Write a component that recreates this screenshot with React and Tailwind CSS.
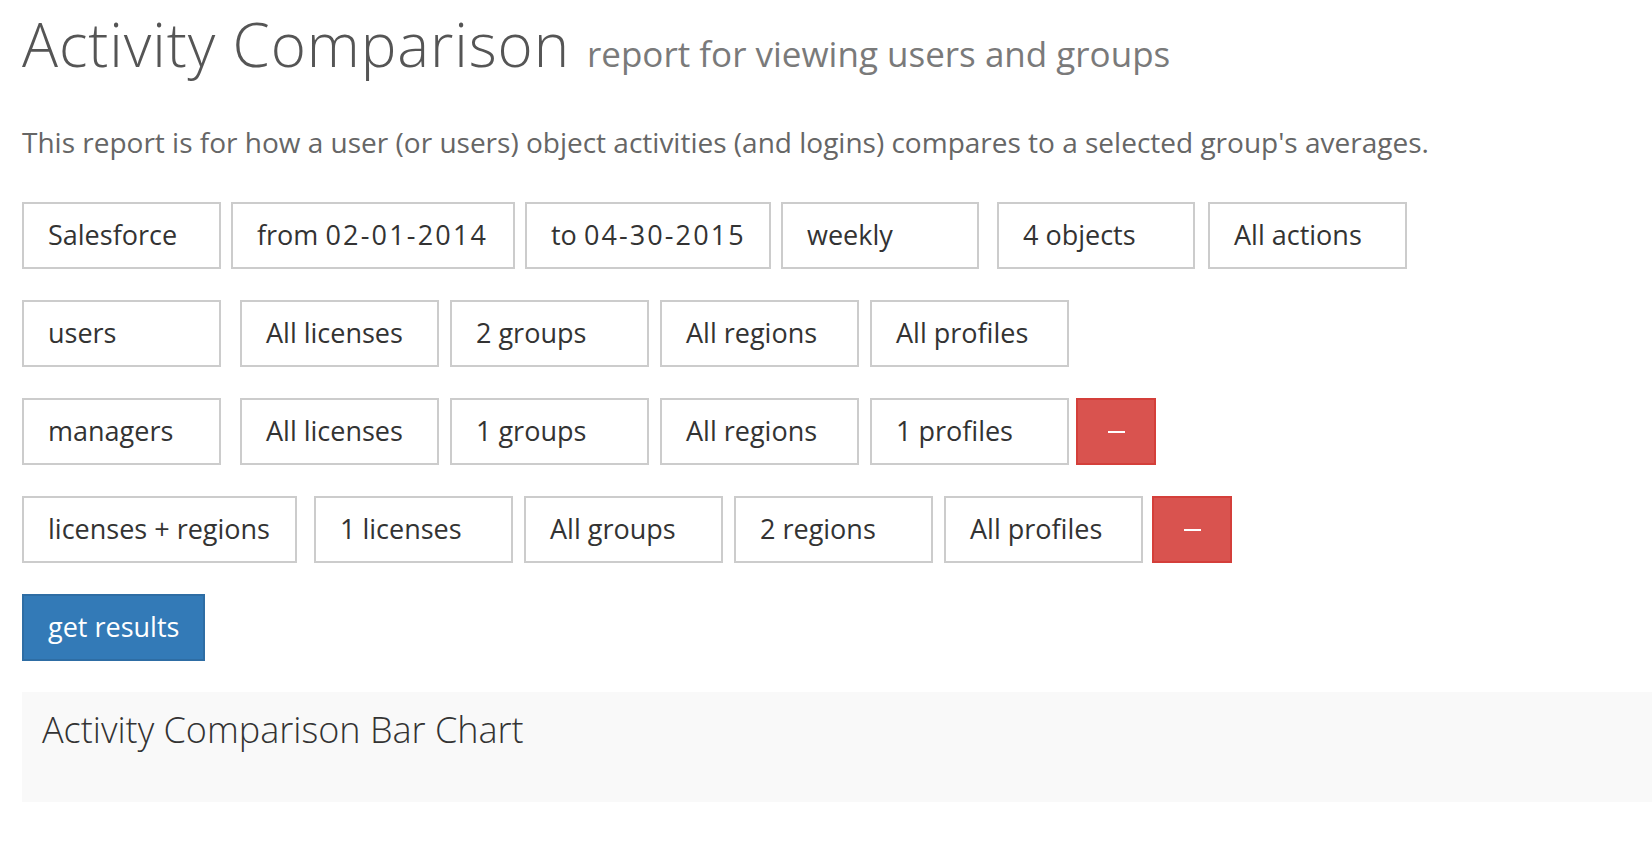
const font = { fontFamily: '"Open Sans", "Noto Sans", sans-serif' }

function Box({ label, w, ml }) {
  return (
    <div
      className={`h-[67px] shrink-0 border-2 border-[#cccccc] bg-white pl-[24px] flex items-center text-[27px] text-[#333333] ${ml}`}
      style={{ width: w }}
    >
      {label}
    </div>
  )
}

function RemoveButton({ ml }) {
  return (
    <button
      className={`h-[67px] w-[80px] shrink-0 bg-[#d9534f] border-2 border-[#d43f3a] flex items-center justify-center ${ml}`}
    >
      <span className="block w-[17px] h-[2px] bg-white" />
    </button>
  )
}

export default function App() {
  return (
    <div className="min-h-screen bg-white" style={font}>
      <div className="pl-[22px]">

        {/* Header */}
        <div className="flex items-baseline pt-[2px] h-[88px]">
          <h1 className="text-[60px] font-light text-[#555555] leading-[84px] tracking-[0.9px]">
            Activity Comparison
          </h1>
          <span className="ml-[17px] text-[35px] text-[#7a7a7a]">
            report for viewing users and groups
          </span>
        </div>

        <p className="mt-[36px] text-[28px] text-[#666666] leading-[36px]">
          This report is for how a user (or users) object activities (and logins) compares to a selected group's averages.
        </p>

        {/* Filters */}
        <div className="mt-[42px] flex flex-col gap-[31px]">
          <div className="flex">
            <Box label="Salesforce" w={199} ml="" />
            <Box
              label={<span>from <span className="tracking-[2.2px]">02-01-2014</span></span>}
              w={284}
              ml="ml-[10px]"
            />
            <Box
              label={<span>to <span className="tracking-[2.1px]">04-30-2015</span></span>}
              w={246}
              ml="ml-[10px]"
            />
            <Box label="weekly" w={198} ml="ml-[10px]" />
            <Box label="4 objects" w={198} ml="ml-[18px]" />
            <Box label="All actions" w={199} ml="ml-[13px]" />
          </div>

          <div className="flex">
            <Box label="users" w={199} ml="" />
            <Box label="All licenses" w={199} ml="ml-[19px]" />
            <Box label="2 groups" w={199} ml="ml-[11px]" />
            <Box label="All regions" w={199} ml="ml-[11px]" />
            <Box label="All profiles" w={199} ml="ml-[11px]" />
          </div>

          <div className="flex">
            <Box label="managers" w={199} ml="" />
            <Box label="All licenses" w={199} ml="ml-[19px]" />
            <Box label="1 groups" w={199} ml="ml-[11px]" />
            <Box label="All regions" w={199} ml="ml-[11px]" />
            <Box label="1 profiles" w={199} ml="ml-[11px]" />
            <RemoveButton ml="ml-[7px]" />
          </div>

          <div className="flex">
            <Box label="licenses + regions" w={275} ml="" />
            <Box label="1 licenses" w={199} ml="ml-[17px]" />
            <Box label="All groups" w={199} ml="ml-[11px]" />
            <Box label="2 regions" w={199} ml="ml-[11px]" />
            <Box label="All profiles" w={199} ml="ml-[11px]" />
            <RemoveButton ml="ml-[9px]" />
          </div>

          <div className="flex">
            <button className="h-[67px] w-[183px] bg-[#337ab7] border-2 border-[#2e6da4] text-white text-[27px] text-left pl-[24px]">
              get results
            </button>
          </div>
        </div>

        {/* Chart panel */}
        <div className="mt-[31px] h-[110px] bg-[#f9f9f9] pl-[20px] pt-[14px]">
          <h2 className="text-[36px] font-light text-[#333333] leading-[48px]">
            Activity Comparison Bar Chart
          </h2>
        </div>
      </div>
    </div>
  )
}
